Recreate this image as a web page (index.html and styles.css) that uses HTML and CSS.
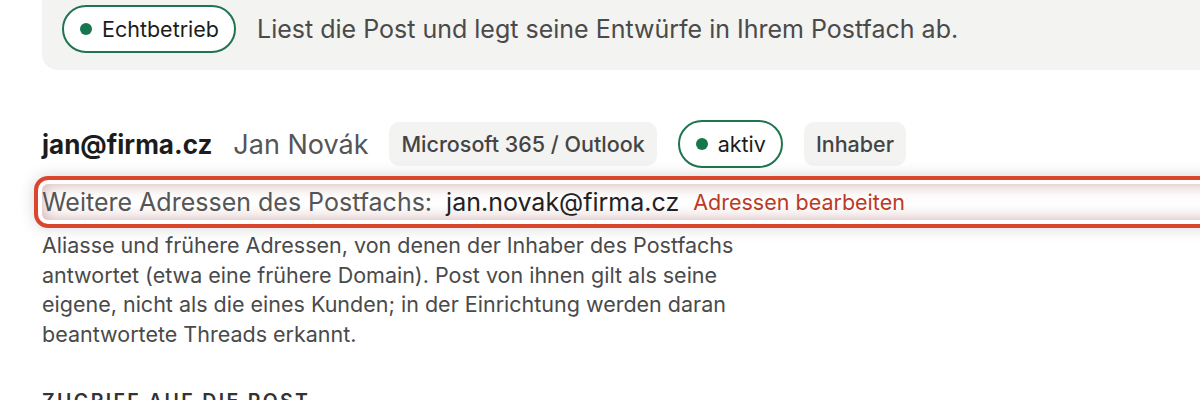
FILE: index.html
```html
<!DOCTYPE html>
<html lang="de">
<head>
  <meta charset="UTF-8" />
  <meta name="viewport" content="width=device-width, initial-scale=1.0"/>
  <title>Postfächer</title>
  <link rel="stylesheet" href="styles.css">
</head>
<body>

  <div class="mode-panel">
    <span class="status-pill"><span class="dot"></span>Echtbetrieb</span>
    <span class="mode-text">Liest die Post und legt seine Entwürfe in Ihrem Postfach ab.</span>
  </div>

  <section class="mailbox">
    <div class="mailbox-head">
      <span class="address">jan@firma.cz</span>
      <span class="owner-name">Jan Novák</span>
      <span class="chip">Microsoft 365 / Outlook</span>
      <span class="status-pill"><span class="dot"></span>aktiv</span>
      <span class="chip">Inhaber</span>
    </div>

    <div class="alias-row">
      <span class="alias-label">Weitere Adressen des Postfachs:</span>
      <span class="alias-value">jan.novak@firma.cz</span>
      <a class="alias-edit" href="#">Adressen bearbeiten</a>
    </div>

    <p class="hint">
      Aliasse und frühere Adressen, von denen der Inhaber des Postfachs
      antwortet (etwa eine frühere Domain). Post von ihnen gilt als seine
      eigene, nicht als die eines Kunden; in der Einrichtung werden daran
      beantwortete Threads erkannt.
    </p>

    <h2 class="section-title">Zugriff auf die Post</h2>
  </section>

</body>
</html>
```

FILE: styles.css
```css
body, html {
  margin: 0;
  padding: 0;
  background: white;
  color: #4a4a4a;
  font-family: Inter, "Liberation Sans", sans-serif;
  overflow: hidden;
}

.mode-panel {
  margin-left: 42px;
  background: #f3f3f1;
  border-bottom-left-radius: 16px;
  padding: 5px 20px 17px;
  display: flex;
  align-items: center;
  gap: 21px;
}

.status-pill {
  display: inline-flex;
  align-items: center;
  gap: 10px;
  box-sizing: border-box;
  height: 48px;
  padding: 0 15px 0 16px;
  border: 2px solid #1f7550;
  border-radius: 24px;
  background: white;
  color: #1c1c1c;
  font-size: 21.5px;
}

.dot {
  width: 12px;
  height: 12px;
  border-radius: 50%;
  background: #16774f;
}

.mode-text {
  font-size: 25px;
  color: #4a4a4a;
}

.mailbox {
  padding-left: 42px;
  margin-top: 50px;
}

.mailbox-head {
  display: flex;
  align-items: center;
  gap: 21px;
}

.address {
  font-size: 26px;
  font-weight: 700;
  color: #1c1c1c;
}

.owner-name {
  font-size: 27px;
  color: #555;
}

.chip {
  display: inline-flex;
  align-items: center;
  height: 44px;
  padding: 0 12px;
  border-radius: 10px;
  background: #f3f3f1;
  color: #444;
  font-size: 21.5px;
  font-weight: 500;
}

.alias-row {
  position: relative;
  margin-top: 16px;
  width: 1300px;
  height: 36px;
  display: flex;
  align-items: center;
  gap: 14px;
  border-radius: 6px;
  box-shadow: inset 0 0 16px rgba(170, 100, 100, 0.55);
}

/* review highlight around the row */
.alias-row::after {
  content: "";
  position: absolute;
  inset: -8px;
  border: 4px solid #d9452d;
  border-radius: 14px;
  box-shadow: 0 0 16px rgba(0, 0, 0, 0.16);
  pointer-events: none;
}

.alias-label {
  font-size: 25px;
  color: #555;
}

.alias-value {
  font-size: 25px;
  color: #222;
}

.alias-edit {
  font-size: 21.5px;
  color: #bb3a24;
  text-decoration: none;
}

.hint {
  margin: 11px 0 0;
  max-width: 740px;
  font-size: 21.5px;
  line-height: 29.5px;
  color: #4a4a4a;
}

.section-title {
  margin: 40px 0 0;
  font-size: 19.5px;
  font-weight: 600;
  letter-spacing: 0.12em;
  text-transform: uppercase;
  color: #333;
}
```
